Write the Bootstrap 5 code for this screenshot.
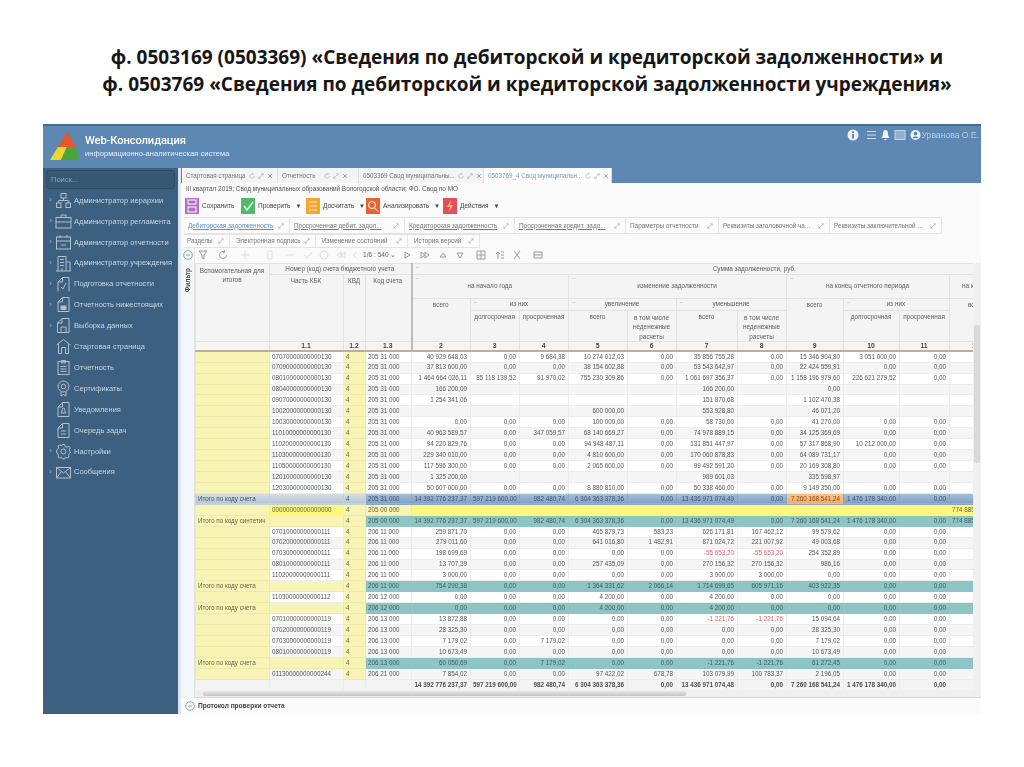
<!DOCTYPE html>
<html lang="ru">
<head>
    <meta charset="UTF-8">
    <title>Web-Консолидация</title>
    <link href="https://cdn.jsdelivr.net/npm/bootstrap@5.3.0/dist/css/bootstrap.min.css" rel="stylesheet">
    <style>
        body { background: #fff; font-family: "Liberation Sans", Arial, sans-serif; color: #555; overflow: hidden; }
        .slide-title { font-family: "Open Sans", "Liberation Sans", sans-serif; font-weight: 700; font-size: 19px; line-height: 27px; color: #161616; text-align: center; padding: 44px 0 0 30px; height: 124px; margin: 0; }
        .app-window { width: 938px; height: 590px; margin-left: 43px; filter: blur(.5px); background: #fafafa; }
        .app-head { height: 44px; background: #5d88b4; border-top: 2px solid #3f6d99; padding: 0 2px 0 7px; flex: none; }
        .app-logo { padding-top: 6px; }
        .app-name { color: #fff; font-family: Roboto, "Liberation Sans", sans-serif; font-size: 11.2px; letter-spacing: -.12px; line-height: 16px; font-weight: 500; margin-top: 1px; }
        .app-sub { color: #e8eef5; font-size: 7.6px; line-height: 9px; white-space: nowrap; }
        .head-tools { color: #b9cde0; font-size: 8.6px; gap: 3px; padding-top: 3px; }
        .app-body { height: 546px; }
        .side-panel { width: 135px; background: #3e6080; color: #c8d5e1; font-size: 7.5px; padding: 2px 3px; flex: none; }
        .side-search { height: 19px; border: 1px solid #2d4c68; border-radius: 3px; background: #375773; color: #8ea6bb; padding: 4px; line-height: 10px; margin-bottom: 1px; }
        .side-item { height: 20.9px; white-space: nowrap; }
        .side-arrow { width: 9px; text-align: center; font-size: 8px; color: #9fb4c6; flex: none; }
        .side-item svg { width: 17px; height: 17px; flex: none; margin-right: 2px; fill: none; stroke: #aebfce; stroke-width: 1; }
        .side-split { width: 3px; background: #dde6ef; flex: none; }
        .main-panel { background: #fafafa; min-width: 0; }
        .tab-strip { height: 15px; background: #5d88b4; padding-left: 1px; flex: none; }
        .win-tab { background: #f4f4f4; border-right: 1px solid #ddd; font-size: 6.3px; color: #777; padding: 0 4px 0 4px; white-space: nowrap; }
        .win-tab.active { background: #fff; color: #6d9ac4; }
        .crumb-line { height: 12px; font-size: 6.4px; line-height: 12px; color: #555; padding-left: 5px; white-space: nowrap; flex: none; }
        .act-bar { height: 22px; flex: none; padding-left: 4px; font-size: 6.5px; color: #444; }
        .act-btn { white-space: nowrap; }
        .act-btn svg { width: 14px; height: 16px; margin-right: 3px; }
        .act-caret { font-size: 6px; margin-left: 5px; }
        .sub-tabs { height: 17px; flex: none; padding-left: 3px; }
        .sub-tabs.low { height: 14px; }
        .sub-tab { border: 1px solid #e4e4e4; border-left: 0; background: #fbfbfb; font-size: 6.4px; color: #777; white-space: nowrap; padding-left: 4px; overflow: hidden; justify-content: space-between; padding-right: 5px; }
        .low .sub-tab { padding-left: 6px; }
        .low .sub-tab:first-child { padding-left: 3px; }
        .sub-tab.lnk span { text-decoration: underline; }
        .sub-tab.on { color: #5b8fc0; }
        .tab-ic { width: 6px; height: 6px; margin-left: 3px; fill: none; stroke: #b5b5b5; stroke-width: 1; flex: none; }
        .filter-strip { width: 14px; flex: none; background: #f4f7fa; border-right: 1px solid #e2e2e2; }
        .circle-ic { width: 10px; height: 10px; fill: none; stroke: #8aa6bf; margin: 2px 0 8px; }
        .filter-word { writing-mode: vertical-rl; transform: rotate(180deg); font-size: 6.5px; font-weight: 700; color: #444; line-height: 8px; }
        .grid-bar { height: 15px; flex: none; position: relative; font-size: 6.6px; color: #666; }
        .grid-bar svg { position: absolute; top: 2px; width: 10px; height: 10px; fill: none; stroke: #9a9a9a; }
        .grid-bar .off { stroke: #ddd; }
        .pager { position: absolute; left: 168px; top: 2px; white-space: nowrap; }
        .grid-area { height: 427px; flex: none; }
        .grid-wrap { width: 778px; overflow: hidden; flex: none; }
        .grid-table { table-layout: fixed; width: 814px; margin: 0; border-collapse: collapse; font-size: 6.3px; line-height: 1; }
        .grid-table > :not(caption) > * > * { padding: 0 3px 0 2px; border: 1px solid #ececec; background: #fff; color: #565656; box-shadow: none; white-space: nowrap; overflow: hidden; vertical-align: middle; font-weight: 400; }
        .grid-table > thead > tr > th { background: #f4f4f4; border-color: #e2e2e2; text-align: center; color: #5e5e5e; position: relative; font-size: 6.4px; }
        .grid-table > thead > tr > th.wrap { white-space: normal; line-height: 9.4px; vertical-align: top; padding-top: 2px; }
        .grid-table > thead > tr > th.top { vertical-align: top; padding-top: 3px; }
        .grid-table > thead > tr > th.lead { border-left: 2px solid #bdbdbd; }
        .grid-table > thead > tr.num-row > th { font-weight: 700; color: #444; border-bottom: 2px solid #b8b29c; font-size: 6.8px; }
        .fold { position: absolute; left: 3px; top: 0; color: #aaa; font-size: 6px; }
        .grid-table tbody td { text-align: right; height: 10.95px; }
        .grid-table tbody tr:nth-child(even) td { background: #f5f5f5; }
        .grid-table tbody td.lft { text-align: left; }
        .grid-table tbody td.yel, .grid-table tbody tr:nth-child(even) td.yel { background: #f8f4b6; border-color: #eee9a5; color: #66664a; }
        .grid-table tbody tr.sum-row td { background: #8ec4c4; border-color: #8ec4c4; color: #3f5f60; }
        .grid-table tbody tr.sum-row td.yel { background: #f8f4b6; border-color: #eee9a5; color: #66664a; }
        .grid-table tbody tr.blue-row td { background: linear-gradient(#a8c0da, #7f9fc3); border-color: #8aa6c6; color: #3f5670; }
        .grid-table tbody tr.blue-row td.dim { background: linear-gradient(#d7dfe4, #b7c6d2); border-color: #c2cfd8; }
        .grid-table tbody tr.blue-row td.hot { background: linear-gradient(#f9c48d, #f2ac6c); color: #8a4a1a; }
        .grid-table tbody tr.gold-row td { background: #fdf77f; border-color: #fdf77f; color: #66663a; }
        .grid-table tbody tr.gold-row td.yel { background: #f8f4b6; border-color: #eee9a5; }
        .grid-table tbody td.neg { color: #e0626a; }
        .grid-table tfoot td { background: #f3f3f3; text-align: right; height: 11px; font-weight: 700; color: #4d4d4d; border-top: 1px solid #cfcfcf; }
        .v-scroll { width: 8px; flex: none; background: #f0f0f0; position: relative; }
        .v-thumb { position: absolute; left: 1px; right: 1px; top: 62px; height: 138px; background: #d9d9d9; border-radius: 2px; }
        .h-scroll { height: 8px; flex: none; background: #efefef; border-bottom: 1px solid #d8d8d8; padding: 1px 0 1px 8px; }
        .h-thumb { width: 483px; height: 100%; background: linear-gradient(#e6e6e6, #c4c4c4); border-radius: 2px; }
        .proto-bar { height: 16px; flex: none; background: #fbfbfb; font-size: 6.55px; font-weight: 700; color: #444; }
        .proto-bar .circle-ic { margin: 0 3px 0 4px; }
    </style>
</head>
<body>
    <svg width="0" height="0" class="position-absolute">
        <symbol id="ic-exp" viewBox="0 0 8 8"><path d="M1 7 7 1M4.500 1H7V3.500M1 4.500V7H3.500"/></symbol>
        <symbol id="ic-ref" viewBox="0 0 8 8"><path d="M7 4A3 3 0 1 1 5.500 1.400M5 .2 5.800 1.500 4.500 2.300"/></symbol>
        <symbol id="ic-x" viewBox="0 0 8 8"><path d="M1.500 1.500 6.500 6.500M6.500 1.500 1.500 6.500" stroke="#888"/></symbol>
        <symbol id="ic-circ" viewBox="0 0 10 10"><circle cx="5" cy="5" r="4.300"/><path d="M3 5H7"/></symbol>
    </svg>

    <h1 class="slide-title">ф. 0503169 (0503369) «Сведения по дебиторской и кредиторской задолженности» и<br>ф. 0503769 «Сведения по дебиторской и кредиторской задолженности учреждения»</h1>

    <div class="app-window d-flex flex-column">
        <div class="app-head d-flex justify-content-between">
            <div class="app-logo d-flex">
                <svg width="30" height="30" viewBox="0 0 30 30" style="margin-right:5px">
                    <polygon points="17,0 26,15 8,15" fill="#e8572b"/>
                    <polygon points="8,15 17,15 11,28 0,28" fill="#e9d72f"/>
                    <polygon points="17,15 26,15 29,28 11,28" fill="#4fa437"/>
                </svg>
                <div>
                    <div class="app-name">Web-Консолидация</div>
                    <div class="app-sub">информационно-аналитическая система</div>
                </div>
            </div>
            <div class="head-tools d-flex align-items-start">
                <svg width="12" height="12" viewBox="0 0 12 12"><circle cx="6" cy="6" r="5.500" fill="#eef3f8"/><rect x="5" y="5" width="2" height="4.500" fill="#5d88b4"/><rect x="5" y="2.300" width="2" height="1.800" fill="#5d88b4"/></svg>
                <svg width="11" height="12" viewBox="0 0 11 12" class="ms-1"><path d="M1 2.500H10M1 6H10M1 9.500H10" stroke="#cddbe8"/></svg>
                <svg width="11" height="12" viewBox="0 0 11 12"><path d="M5.500 1C3.500 1 3 3 3 5S2 8 1 9H10C9 8 8 7 8 5S7.500 1 5.500 1ZM4 10H7L5.500 11.500Z" fill="#eef3f8"/></svg>
                <svg width="12" height="12" viewBox="0 0 12 12"><rect x="1" y="1.500" width="10" height="9" fill="#92afcb" stroke="#c6d6e5"/></svg>
                <svg width="11" height="12" viewBox="0 0 12 12" style="margin-left:1px"><circle cx="6" cy="6" r="5.500" fill="#eef3f8"/><circle cx="6" cy="4.500" r="2" fill="#5d88b4"/><path d="M2.500 9.500C3.500 7 8.500 7 9.500 9.500Z" fill="#5d88b4"/></svg>
                <span style="margin-left:-2px">Урванова О.Е.</span>
            </div>
        </div>

        <div class="app-body d-flex">
            <nav class="side-panel">
                <div class="side-search">Поиск...</div>
                <div class="side-item d-flex align-items-center"><span class="side-arrow">›</span><svg viewBox="0 0 17 17"><rect x="6" y="1.500" width="5" height="4.500"/><rect x="1.500" y="11" width="4.500" height="4.500"/><rect x="11" y="11" width="4.500" height="4.500"/><path d="M8.500 6V8.500M3.700 11V8.500H13.300V11"/></svg>Администратор иерархии</div>
                <div class="side-item d-flex align-items-center"><span class="side-arrow">›</span><svg viewBox="0 0 17 17"><rect x="1" y="4.500" width="15" height="10.500"/><path d="M6 4.500V2H11V4.500M1 9H16"/></svg>Администратор регламента</div>
                <div class="side-item d-flex align-items-center"><span class="side-arrow">›</span><svg viewBox="0 0 17 17"><rect x="1.500" y="3" width="14" height="12"/><path d="M1.500 7H15.500M5 1V4M12 1V4M6 11H11"/></svg>Администратор отчетности</div>
                <div class="side-item d-flex align-items-center"><span class="side-arrow">›</span><svg viewBox="0 0 17 17"><path d="M3 16V1.500H11V16M11 7H15V16M1 16H16M5 4.500H9M5 7.500H9M5 10.500H9M7 13V16"/></svg>Администратор учреждения</div>
                <div class="side-item d-flex align-items-center"><span class="side-arrow">›</span><svg viewBox="0 0 17 17"><path d="M3 15.500V6L7.500 1.500H14V15.500M7.500 1.500V6H3M8 13 11 7M6 11 8 13"/></svg>Подготовка отчетности</div>
                <div class="side-item d-flex align-items-center"><span class="side-arrow">›</span><svg viewBox="0 0 17 17"><path d="M3 15.500V6L7.500 1.500H14V15.500ZM7.500 1.500V6H3"/><rect x="6" y="10" width="5" height="3.500" fill="#aebfce"/></svg>Отчетность нижестоящих</div>
                <div class="side-item d-flex align-items-center"><span class="side-arrow">›</span><svg viewBox="0 0 17 17"><path d="M2.500 15.500V6L7 1.500H14V15.500ZM7 1.500V6H2.500M6 15.500V10H11V15.500"/></svg>Выборка данных</div>
                <div class="side-item d-flex align-items-center"><span class="side-arrow"></span><svg viewBox="0 0 17 17"><path d="M1.500 7 8.500 1.500 15.500 7M3.500 6V15.500H6.500V9.500H10.500V15.500H13.500V6"/></svg>Стартовая страница</div>
                <div class="side-item d-flex align-items-center"><span class="side-arrow"></span><svg viewBox="0 0 17 17"><rect x="3" y="2.500" width="11" height="13"/><path d="M6.500 1.500H10.500V4H6.500ZM5.500 7.500H11.500M5.500 10H11.500M5.500 12.500H11.500"/></svg>Отчетность</div>
                <div class="side-item d-flex align-items-center"><span class="side-arrow"></span><svg viewBox="0 0 17 17"><circle cx="8.500" cy="6.500" r="5.500"/><circle cx="8.500" cy="6.500" r="2.300"/><path d="M6 12V16L8.500 14.500 11 16V12"/></svg>Сертификаты</div>
                <div class="side-item d-flex align-items-center"><span class="side-arrow"></span><svg viewBox="0 0 17 17"><path d="M3 15.500V6L7.500 1.500H14V15.500ZM7.500 1.500V6H3M6 12H11L9.800 10V8.500A1.300 1.300 0 0 0 7.200 8.500V10Z"/></svg>Уведомления</div>
                <div class="side-item d-flex align-items-center"><span class="side-arrow"></span><svg viewBox="0 0 17 17"><path d="M3 15.500V6L7.500 1.500H14V15.500ZM7.500 1.500V6H3M6 9H11M6 12H11"/></svg>Очередь задач</div>
                <div class="side-item d-flex align-items-center"><span class="side-arrow">›</span><svg viewBox="0 0 17 17"><circle cx="8.500" cy="8.500" r="2.500"/><path d="M7.300 1.500H9.700L10.100 3.500 12 4.300 13.700 3.200 15.300 4.900 14.200 6.600 15 8.500 15.500 9.700 14.200 10.400 13.500 12.300 14 14 12.300 15 10.400 14.200 9.700 15.800H7.300L6.600 14.200 4.700 15 3 14 3.500 12.300 2.800 10.400 1.500 9.700V7.300L2.800 6.600 3.500 4.700 3 3 4.700 2 6.600 2.800Z"/></svg>Настройки</div>
                <div class="side-item d-flex align-items-center"><span class="side-arrow">›</span><svg viewBox="0 0 17 17"><rect x="1.500" y="3.500" width="14" height="10.500"/><path d="M1.500 3.500 8.500 9 15.500 3.500M1.500 14 6.500 7.500M15.500 14 10.500 7.500"/></svg>Сообщения</div>
            </nav>
            <div class="side-split"></div>

            <main class="main-panel flex-grow-1 d-flex flex-column">
                <div class="tab-strip d-flex">
                    <div class="win-tab d-flex align-items-center" style="width:96px">Стартовая страница<svg class="tab-ic"><use href="#ic-ref"/></svg><svg class="tab-ic"><use href="#ic-exp"/></svg><svg class="tab-ic"><use href="#ic-x"/></svg></div>
                    <div class="win-tab d-flex align-items-center" style="width:81px">Отчетность<svg class="tab-ic ms-2"><use href="#ic-ref"/></svg><svg class="tab-ic"><use href="#ic-exp"/></svg><svg class="tab-ic"><use href="#ic-x"/></svg></div>
                    <div class="win-tab d-flex align-items-center" style="width:125px">0503369 Свод муниципальны...<svg class="tab-ic"><use href="#ic-ref"/></svg><svg class="tab-ic"><use href="#ic-exp"/></svg><svg class="tab-ic"><use href="#ic-x"/></svg></div>
                    <div class="win-tab active d-flex align-items-center" style="width:128px">0503769_4 Свод муниципальн...<svg class="tab-ic"><use href="#ic-ref"/></svg><svg class="tab-ic"><use href="#ic-exp"/></svg><svg class="tab-ic"><use href="#ic-x"/></svg></div>
                </div>
                <div class="crumb-line">III квартал 2019; Свод муниципальных образований Вологодской области; ФО. Свод по МО</div>
                <div class="act-bar d-flex align-items-center">
                    <div class="act-btn d-flex align-items-center" style="width:56px"><svg viewBox="0 0 14 16"><rect width="14" height="16" fill="#b56fc6"/><rect x="3" y="2" width="8" height="4" fill="none" stroke="#fff"/><rect x="3" y="9" width="8" height="5" fill="none" stroke="#fff"/></svg>Сохранить</div>
                    <div class="act-btn d-flex align-items-center" style="width:65px"><svg viewBox="0 0 14 16"><rect width="14" height="16" fill="#4fb96d"/><path d="M3 8 6 12 12 4" fill="none" stroke="#dff5e5" stroke-width="1.600"/></svg>Проверить<span class="act-caret">▼</span></div>
                    <div class="act-btn d-flex align-items-center" style="width:60px"><svg viewBox="0 0 14 16"><rect width="14" height="16" fill="#f4a62d"/><path d="M3 4H11M3 8H11M3 12H11" stroke="#fde7bd"/></svg>Досчитать<span class="act-caret">▼</span></div>
                    <div class="act-btn d-flex align-items-center" style="width:77px"><svg viewBox="0 0 14 16"><rect width="14" height="16" fill="#e8642e"/><circle cx="6" cy="7" r="3.500" fill="none" stroke="#fff"/><path d="M8.500 10 12 13.500" stroke="#fff"/></svg>Анализировать<span class="act-caret">▼</span></div>
                    <div class="act-btn d-flex align-items-center"><svg viewBox="0 0 14 16"><rect width="14" height="16" fill="#e0505c"/><path d="M8 2 4 9H7L6 14 10 7H7Z" fill="#f7b75e"/></svg>Действия<span class="act-caret">▼</span></div>
                </div>
                <div class="sub-tabs d-flex">
                    <div class="sub-tab lnk on d-flex align-items-center" style="width:106px"><span>Дебиторская задолженность</span><svg class="tab-ic"><use href="#ic-exp"/></svg></div>
                    <div class="sub-tab lnk d-flex align-items-center" style="width:115px"><span>Просроченная дебит. задол...</span><svg class="tab-ic"><use href="#ic-exp"/></svg></div>
                    <div class="sub-tab lnk d-flex align-items-center" style="width:110px"><span>Кредиторская задолженность</span><svg class="tab-ic"><use href="#ic-exp"/></svg></div>
                    <div class="sub-tab lnk d-flex align-items-center" style="width:111px"><span>Просроченная кредит. задо...</span><svg class="tab-ic"><use href="#ic-exp"/></svg></div>
                    <div class="sub-tab d-flex align-items-center" style="width:93px"><span>Параметры отчетности</span><svg class="tab-ic"><use href="#ic-exp"/></svg></div>
                    <div class="sub-tab d-flex align-items-center" style="width:111px"><span>Реквизиты заголовочной ча...</span><svg class="tab-ic"><use href="#ic-exp"/></svg></div>
                    <div class="sub-tab d-flex align-items-center" style="width:112px"><span>Реквизиты заключительной ...</span><svg class="tab-ic"><use href="#ic-exp"/></svg></div>
                </div>
                <div class="sub-tabs low d-flex">
                    <div class="sub-tab d-flex align-items-center" style="width:46px"><span>Разделы</span><svg class="tab-ic"><use href="#ic-exp"/></svg></div>
                    <div class="sub-tab d-flex align-items-center" style="width:86px"><span>Электронная подпись</span><svg class="tab-ic"><use href="#ic-exp"/></svg></div>
                    <div class="sub-tab d-flex align-items-center" style="width:92px"><span>Изменение состояний</span><svg class="tab-ic"><use href="#ic-exp"/></svg></div>
                    <div class="sub-tab d-flex align-items-center" style="width:72px"><span>История версий</span><svg class="tab-ic"><use href="#ic-exp"/></svg></div>
                </div>

                <div class="d-flex flex-grow-1">
                    <div class="filter-strip d-flex flex-column align-items-center">
                        <svg class="circle-ic"><use href="#ic-circ"/></svg>
                        <div class="filter-word">Фильтр</div>
                    </div>
                    <div class="flex-grow-1 d-flex flex-column" style="min-width:0">
                        <div class="grid-bar">
                            <svg viewBox="0 0 10 10" style="left:3px"><path d="M1 1H9L6 5V9L4 8V5Z"/></svg>
                            <svg viewBox="0 0 10 10" style="left:23px"><path d="M8.500 5A3.500 3.500 0 1 1 6.500 1.800M6 0 7 2 5 3"/></svg>
                            <svg viewBox="0 0 10 10" class="off" style="left:45px"><path class="off" d="M5 1V9M1 5H9"/></svg>
                            <svg viewBox="0 0 10 10" class="off" style="left:70px"><path d="M3 1H7V9H3Z"/></svg>
                            <svg viewBox="0 0 10 10" class="off" style="left:90px"><path d="M1 5H9"/></svg>
                            <svg viewBox="0 0 10 10" class="off" style="left:108px"><path d="M1 5 4 8 9 2"/></svg>
                            <svg viewBox="0 0 10 10" class="off" style="left:124px"><circle cx="5" cy="5" r="4"/></svg>
                            <svg viewBox="0 0 10 10" class="off" style="left:141px"><path d="M5 2 1 5 5 8ZM9 2 5 5 9 8Z"/></svg>
                            <svg viewBox="0 0 10 10" class="off" style="left:155px"><path d="M7 2 3 5 7 8"/></svg>
                            <span class="pager">1/6 : 540 ⌄</span>
                            <svg viewBox="0 0 10 10" style="left:207px"><path d="M3 2 8 5 3 8Z"/></svg>
                            <svg viewBox="0 0 10 10" style="left:225px"><path d="M1 2 5 5 1 8ZM5 2 9 5 5 8Z"/></svg>
                            <svg viewBox="0 0 10 10" style="left:243px"><path d="M2 7 5 3 8 7Z"/></svg>
                            <svg viewBox="0 0 10 10" style="left:260px"><path d="M2 3H8L5 8Z"/></svg>
                            <svg viewBox="0 0 10 10" style="left:281px"><path d="M1 1H9V9H1ZM1 5H9M5 1V9"/></svg>
                            <svg viewBox="0 0 10 10" style="left:300px"><path d="M3 9V2M1 4 3 2 5 4M6 2H9M6 5H9M6 8H9"/></svg>
                            <svg viewBox="0 0 10 10" style="left:317px"><path d="M2 1 8 9M8 1 2 9"/></svg>
                            <svg viewBox="0 0 10 10" style="left:338px"><path d="M1 2H9V8H1ZM1 5H9"/></svg>
                        </div>
                        <div class="grid-area d-flex">
                            <div class="grid-wrap">
                                <table class="table grid-table">
                                    <colgroup>
                                        <col style="width:74px"><col style="width:74px"><col style="width:22px"><col style="width:46px"><col style="width:59px"><col style="width:49px"><col style="width:49px"><col style="width:59px"><col style="width:49px"><col style="width:61px"><col style="width:49px"><col style="width:57px"><col style="width:56px"><col style="width:50px"><col style="width:60px">
                                    </colgroup>
                                    <thead>
                                        <tr style="height:11px">
                                            <th rowspan="4" class="wrap">Вспомогательная для итогов</th>
                                            <th colspan="3">Номер (код) счета бюджетного учета</th>
                                            <th colspan="11" class="lead" style="padding-left:90px">Сумма задолженности, руб.<span class="fold">−</span></th>
                                        </tr>
                                        <tr style="height:24px">
                                            <th rowspan="3" class="top">Часть КБК</th>
                                            <th rowspan="3" class="top">КВД</th>
                                            <th rowspan="3" class="top">Код счета</th>
                                            <th colspan="3" class="lead">на начало года<span class="fold">−</span></th>
                                            <th colspan="4">изменение задолженности<span class="fold">−</span></th>
                                            <th colspan="3">на конец отчетного периода<span class="fold">−</span></th>
                                            <th class="text-start" style="padding-left:12px">на конец</th>
                                        </tr>
                                        <tr style="height:12px">
                                            <th rowspan="2" class="lead top">всего</th>
                                            <th colspan="2">из них<span class="fold">−</span></th>
                                            <th colspan="2">увеличение<span class="fold">−</span></th>
                                            <th colspan="2">уменьшение<span class="fold">−</span></th>
                                            <th rowspan="2" class="top">всего</th>
                                            <th colspan="2">из них<span class="fold">−</span></th>
                                            <th rowspan="2" class="top text-start" style="padding-left:18px">всего</th>
                                        </tr>
                                        <tr style="height:30px">
                                            <th class="top">долгосрочная</th>
                                            <th class="top">просроченная</th>
                                            <th class="top">всего</th>
                                            <th class="wrap">в том числе неденежные расчеты</th>
                                            <th class="top">всего</th>
                                            <th class="wrap">в том числе неденежные расчеты</th>
                                            <th class="top">долгосрочная</th>
                                            <th class="top">просроченная</th>
                                        </tr>
                                        <tr class="num-row" style="height:9.500px">
                                            <th></th><th>1.1</th><th>1.2</th><th>1.3</th><th class="lead">2</th><th>3</th><th>4</th><th>5</th><th>6</th><th>7</th><th>8</th><th>9</th><th>10</th><th>11</th><th class="text-start" style="padding-left:22px">12</th>
                                        </tr>
                                    </thead>
                                    <tbody id="gridRows"></tbody>
                                    <tfoot>
                                        <tr>
                                            <td></td><td></td><td></td><td></td><td>14 392 776 237,37</td><td>597 219 600,00</td><td>982 480,74</td><td>6 304 363 378,36</td><td>0,00</td><td>13 436 971 074,48</td><td>0,00</td><td>7 260 168 541,24</td><td>1 476 178 340,00</td><td>0,00</td><td></td>
                                        </tr>
                                    </tfoot>
                                </table>
                            </div>
                            <div class="v-scroll"><div class="v-thumb"></div></div>
                        </div>
                        <div class="h-scroll"><div class="h-thumb"></div></div>
                    </div>
                </div>
                <div class="proto-bar d-flex align-items-center"><svg class="circle-ic"><use href="#ic-circ"/></svg>Протокол проверки отчета</div>
            </main>
        </div>
    </div>

    <script src="https://cdn.jsdelivr.net/npm/bootstrap@5.3.0/dist/js/bootstrap.bundle.min.js"></script>
    <script>
        // kind: '' data row, sum teal, blue first total, gold synthetic
        const Z = '0,00';
        const itogo = 'Итого по коду счета';
        const rows = [
            ['', '07070000000000130', '205 31 000', ['40 929 648,03', Z, '9 684,38', '10 274 012,03', Z, '35 856 755,28', Z, '15 346 904,80', '3 051 000,00', Z, '']],
            ['', '07090000000000130', '205 31 000', ['37 813 600,00', Z, Z, '38 154 602,88', Z, '53 543 642,97', Z, '22 424 559,91', Z, Z, '']],
            ['', '08010000000000130', '205 31 000', ['1 464 664 026,11', '85 118 139,52', '91 970,02', '755 230 309,86', Z, '1 061 697 356,37', Z, '1 158 196 979,60', '226 621 279,52', Z, '']],
            ['', '08040000000000130', '205 31 000', ['166 200,00', '', '', '', '', '166 200,00', '', Z, '', '', '']],
            ['', '09070000000000130', '205 31 000', ['1 254 341,06', '', '', '', '', '151 870,68', '', '1 102 470,38', '', '', '']],
            ['', '10020000000000130', '205 31 000', ['', '', '', '600 000,00', '', '553 928,80', '', '46 071,20', '', '', '']],
            ['', '10030000000000130', '205 31 000', [Z, Z, Z, '100 000,00', Z, '58 730,00', Z, '41 270,00', Z, Z, '']],
            ['', '11010000000000130', '205 31 000', ['40 963 589,57', Z, '347 059,57', '68 140 669,27', Z, '74 978 889,15', Z, '34 125 369,69', Z, Z, '']],
            ['', '11020000000000130', '205 31 000', ['94 220 829,76', Z, Z, '94 948 487,11', Z, '131 851 447,97', Z, '57 317 868,90', '10 212 000,00', Z, '']],
            ['', '11030000000000130', '205 31 000', ['229 340 010,00', Z, Z, '4 810 600,00', Z, '170 060 878,83', Z, '64 089 731,17', Z, Z, '']],
            ['', '11050000000000130', '205 31 000', ['117 596 300,00', Z, Z, '2 065 600,00', Z, '99 492 591,20', Z, '20 169 308,80', Z, Z, '']],
            ['', '12010000000000130', '205 31 000', ['1 325 200,00', '', '', '', '', '989 601,03', '', '335 598,97', '', '', '']],
            ['', '12030000000000130', '205 31 000', ['50 607 000,00', Z, Z, '8 880 810,00', Z, '50 338 460,00', Z, '9 149 350,00', Z, Z, '']],
            ['blue', itogo, '205 31 000', ['14 392 776 237,37', '597 219 600,00', '982 480,74', '6 304 363 378,36', Z, '13 436 971 074,49', Z, '7 260 168 541,24', '1 476 178 340,00', Z, '']],
            ['gold', '00000000000000000', '205 00 000', ['', '', '', '', '', '', '', '', '', '', '774 885']],
            ['sum', 'Итого по коду синтетич', '205 00 000', ['14 392 776 237,37', '597 219 600,00', '982 480,74', '6 304 363 378,36', Z, '13 436 971 074,49', Z, '7 260 168 541,24', '1 476 178 340,00', Z, '774 885']],
            ['', '07010000000000111', '206 11 000', ['259 871,70', Z, Z, '465 879,73', '583,23', '626 171,81', '167 462,12', '99 579,62', Z, Z, '']],
            ['', '07020000000000111', '206 11 000', ['279 011,60', Z, Z, '641 016,80', '1 482,91', '871 024,72', '221 007,92', '49 003,68', Z, Z, '']],
            ['', '07030000000000111', '206 11 000', ['198 699,69', Z, Z, Z, Z, '-55 653,20', '-55 653,20', '254 352,89', Z, Z, '']],
            ['', '08010000000000111', '206 11 000', ['13 707,39', Z, Z, '257 435,09', Z, '270 156,32', '270 156,32', '986,16', Z, Z, '']],
            ['', '11020000000000111', '206 11 000', ['3 000,00', Z, Z, Z, Z, '3 000,00', '3 000,00', Z, Z, Z, '']],
            ['sum', itogo, '206 11 000', ['754 290,38', Z, Z, '1 364 331,62', '2 066,14', '1 714 699,65', '605 971,16', '403 922,35', Z, Z, '']],
            ['', '11030000000000112', '206 12 000', [Z, Z, Z, '4 200,00', Z, '4 200,00', Z, Z, Z, Z, '']],
            ['sum', itogo, '206 12 000', [Z, Z, Z, '4 200,00', Z, '4 200,00', Z, Z, Z, Z, '']],
            ['', '07010000000000119', '206 13 000', ['13 872,88', Z, Z, Z, Z, '-1 221,76', '-1 221,76', '15 094,64', Z, Z, '']],
            ['', '07020000000000119', '206 13 000', ['28 325,30', Z, Z, Z, Z, Z, Z, '28 325,30', Z, Z, '']],
            ['', '07030000000000119', '206 13 000', ['7 179,02', Z, '7 179,02', Z, Z, Z, Z, '7 179,02', Z, Z, '']],
            ['', '08010000000000119', '206 13 000', ['10 673,49', Z, Z, Z, Z, Z, Z, '10 673,49', Z, Z, '']],
            ['sum', itogo, '206 13 000', ['60 050,69', Z, '7 179,02', Z, Z, '-1 221,76', '-1 221,76', '61 272,45', Z, Z, '']],
            ['', '01130000000000244', '206 21 000', ['7 854,02', Z, Z, '97 422,02', '678,78', '103 079,99', '100 783,37', '2 196,05', Z, Z, '']]
        ];

        const tbody = document.getElementById('gridRows');
        rows.forEach(([kind, label, code, nums]) => {
            const total = kind === 'sum' || kind === 'blue';
            const sideCls = kind === 'blue' ? 'dim' : 'yel';
            let html = '';
            if (total) {
                html += `<td class="lft ${sideCls}">${label}</td><td class="lft ${sideCls}"></td>`;
            } else {
                html += `<td class="lft yel"></td><td class="lft">${label}</td>`;
            }
            html += `<td class="lft ${sideCls}">4</td>`;
            html += `<td class="lft${kind === 'gold' ? ' yel' : ''}">${code}</td>`;
            nums.forEach((n, i) => {
                let cls = '';
                if (n.startsWith('-')) cls = 'neg';
                if (kind === 'blue' && i === 7) cls = 'hot';
                if (i === 10) cls += ' lft';
                html += `<td class="${cls}">${n}</td>`;
            });
            const tr = document.createElement('tr');
            if (kind) tr.className = kind + '-row';
            tr.innerHTML = html;
            tbody.appendChild(tr);
        });
    </script>
</body>
</html>
